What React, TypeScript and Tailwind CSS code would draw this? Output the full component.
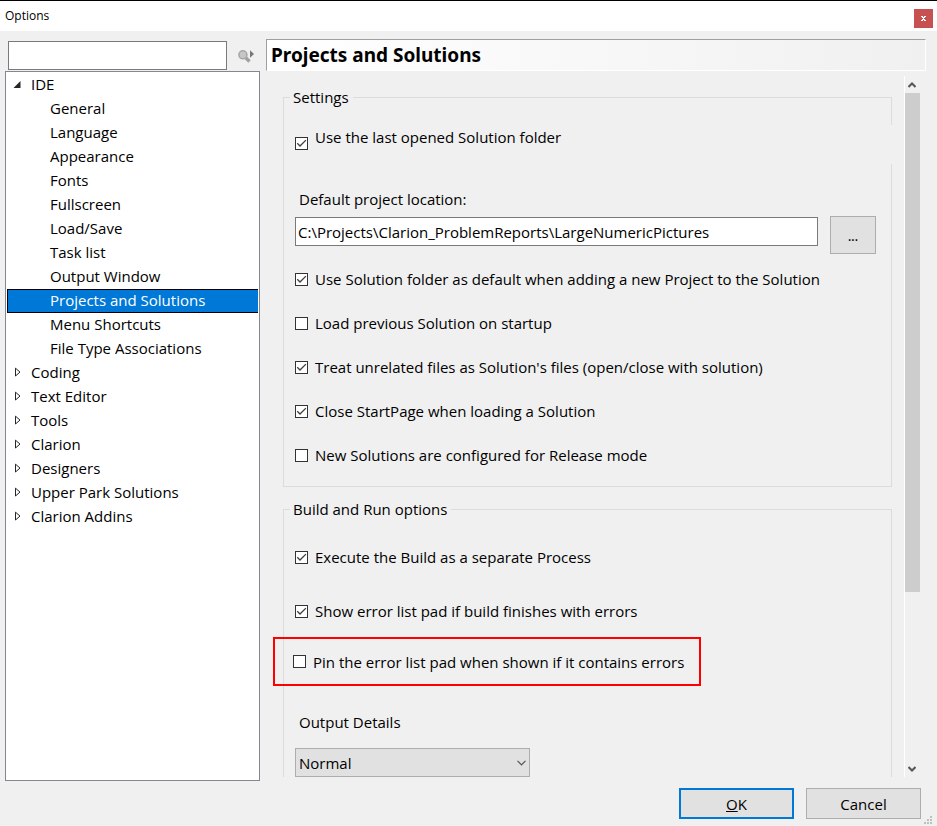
import { useState } from 'react';
import type { ReactNode } from 'react';
import clsx from 'clsx';

const ideItems = [
  'General',
  'Language',
  'Appearance',
  'Fonts',
  'Fullscreen',
  'Load/Save',
  'Task list',
  'Output Window',
  'Projects and Solutions',
  'Menu Shortcuts',
  'File Type Associations',
];

const categories = ['Coding', 'Text Editor', 'Tools', 'Clarion', 'Designers', 'Upper Park Solutions', 'Clarion Addins'];

function CheckBox({ id, defaultChecked }: { id: string; defaultChecked?: boolean }) {
  return (
    <span className="grid h-[13px] w-[13px] shrink-0">
      <input
        id={id}
        type="checkbox"
        defaultChecked={defaultChecked}
        className="peer col-start-1 row-start-1 h-[13px] w-[13px] appearance-none border border-[#333333] bg-white"
      />
      <svg
        viewBox="0 0 13 13"
        className="pointer-events-none invisible col-start-1 row-start-1 h-[13px] w-[13px] peer-checked:visible"
        fill="none"
        stroke="#3c3c3c"
        strokeWidth="1.3"
      >
        <path d="M2.3 6.3 L5 9 L10.9 3.1" />
      </svg>
    </span>
  );
}

function CheckRow({ id, checked, children }: { id: string; checked?: boolean; children: ReactNode }) {
  return (
    <div className="flex h-5 items-center gap-[7px]">
      <CheckBox id={id} defaultChecked={checked} />
      <label htmlFor={id}>{children}</label>
    </div>
  );
}

function Group({ title, className, children }: { title: string; className?: string; children: ReactNode }) {
  return (
    <fieldset className={clsx('min-w-0 border border-[#dcdcdc] pr-[15px] pl-[11px]', className)}>
      <legend className="-ml-[5px] pr-1 pl-[3px] leading-5">{title}</legend>
      {children}
    </fieldset>
  );
}

export default function App() {
  const [selected, setSelected] = useState('Projects and Solutions');

  return (
    <div className="flex min-h-screen flex-col bg-[#f0f0f0] font-['Open_Sans',sans-serif] text-[15px] leading-5 text-black">
      {/* Title bar */}
      <header className="flex h-[31px] items-center justify-between border-t border-black bg-white pr-1 pl-[5px]">
        <h1 className="text-xs">Options</h1>
        <button aria-label="Close" className="mt-1 flex h-[19px] w-[19px] items-center justify-center bg-[#c75050]">
          <svg viewBox="0 0 5 5" className="h-[5px] w-[5px]" fill="#fff" shapeRendering="crispEdges">
            <path d="M0 0h2v1h1v-1h2v1h-1v1h-1v1h1v1h1v1h-2v-1h-1v1h-2v-1h1v-1h1v-1h-1v-1h-1z" />
          </svg>
        </button>
      </header>

      <main className="flex flex-1 gap-[6px] pr-[11px] pl-[5px]">
        {/* Category tree */}
        <div className="flex w-[255px] shrink-0 flex-col pt-[10px]">
          <div className="mb-px flex items-center pl-[3px]">
            <input aria-label="Search options" className="h-[29px] w-[219px] border border-[#7a7a7a] bg-white px-1" />
            <button aria-label="Search" className="ml-[11px]">
              <svg viewBox="0 0 16 14" className="h-[14px] w-4">
                <path d="M7.5 8.5 L11.5 12.5" stroke="#a0a0a0" strokeWidth="3.4" />
                <circle cx="4.9" cy="5.8" r="4" fill="#c6c6c6" stroke="#a8a8a8" strokeWidth="1.6" />
                <path d="M12 1.2v7.6l4-3.8z" fill="#777" />
              </svg>
            </button>
          </div>
          <nav className="flex-1 border border-[#828790] bg-white p-px">
            <button className="flex h-6 w-full items-center pb-[2px] text-left">
              <svg viewBox="0 0 7 7" className="mr-[10px] ml-[6px] h-[7px] w-2 shrink-0">
                <path d="M7 0v7H0z" fill="#262626" />
              </svg>
              IDE
            </button>
            <ul>
              {ideItems.map((item) => (
                <li key={item}>
                  <button
                    onClick={() => setSelected(item)}
                    className={clsx(
                      'flex h-6 w-full items-center border-y border-l pb-[2px] pl-[42px] text-left',
                      item === selected ? 'border-black bg-[#0078d7] text-white' : 'border-transparent',
                    )}
                  >
                    {item}
                  </button>
                </li>
              ))}
              {categories.map((item) => (
                <li key={item}>
                  <button className="flex h-6 w-full items-center pb-[2px] text-left">
                    <svg viewBox="0 0 6 10" className="mr-[10px] ml-2 h-[10px] w-[6px] shrink-0" fill="none" stroke="#262626">
                      <path d="M0.5 1.2v7.8L5 5.1z" />
                    </svg>
                    {item}
                  </button>
                </li>
              ))}
            </ul>
          </nav>
        </div>

        {/* Options panel */}
        <section className="flex min-w-0 flex-1 flex-col pt-2 pb-1">
          <h2 className="flex h-8 items-center border border-t-[#a0a0a0] border-r-white border-b-white border-l-[#a0a0a0] bg-linear-to-r from-white to-[#f0f0f0] pl-1 font-['Noto_Sans',sans-serif] text-[19px] font-bold">
            Projects and Solutions
          </h2>

          <div className="mt-[5px] mr-[6px] flex flex-1">
            <div className="min-w-0 flex-1 pt-[11px] pr-3 pl-[17px]">
              <Group title="Settings" className="pb-[21px]">
                <div className="mt-[18px] -mr-4 flex h-[39px] items-center gap-[7px] bg-[#f0f0f0] pb-[2px]">
                  <CheckBox id="last-folder" defaultChecked />
                  <label htmlFor="last-folder" className="pb-[14px]">
                    Use the last opened Solution folder
                  </label>
                </div>

                <label htmlFor="location" className="mt-[25px] block pl-1">
                  Default project location:
                </label>
                <div className="mt-[7px] flex items-start gap-3">
                  <input
                    id="location"
                    defaultValue="C:\Projects\Clarion_ProblemReports\LargeNumericPictures"
                    className="mt-px h-[29px] min-w-0 flex-1 border border-[#7a7a7a] bg-white px-[2px]"
                  />
                  <button className="h-[38px] w-[46px] border border-[#adadad] bg-[#e1e1e1] pt-1 text-xs font-semibold">
                    ...
                  </button>
                </div>

                <div className="mt-[15px] flex flex-col gap-6">
                  <CheckRow id="default-folder" checked>
                    Use Solution folder as default when adding a new Project to the Solution
                  </CheckRow>
                  <CheckRow id="load-previous">Load previous Solution on startup</CheckRow>
                  <CheckRow id="unrelated" checked>
                    Treat unrelated files as Solution's files (open/close with solution)
                  </CheckRow>
                  <CheckRow id="close-start" checked>
                    Close StartPage when loading a Solution
                  </CheckRow>
                  <CheckRow id="release">New Solutions are configured for Release mode</CheckRow>
                </div>
              </Group>

              <Group title="Build and Run options" className="mt-3 border-b-0">
                <div className="mt-7 flex flex-col gap-[34px]">
                  <CheckRow id="separate" checked>
                    Execute the Build as a separate Process
                  </CheckRow>
                  <CheckRow id="show-errors" checked>
                    Show error list pad if build finishes with errors
                  </CheckRow>
                </div>
                <div className="mt-4 -ml-[22px] flex h-[49px] w-[428px] items-center border-2 border-[#ff0000] pl-[18px]">
                  <CheckRow id="pin-errors">Pin the error list pad when shown if it contains errors</CheckRow>
                </div>
                <label htmlFor="details" className="mt-[26px] block pl-1">
                  Output Details
                </label>
                <div className="mt-4 grid w-[235px] items-center">
                  <select
                    id="details"
                    className="col-start-1 row-start-1 h-[29px] w-full appearance-none border border-[#adadad] bg-[#e1e1e1] pl-[3px]"
                  >
                    <option>Normal</option>
                  </select>
                  <svg
                    viewBox="0 0 9 6"
                    className="pointer-events-none col-start-1 row-start-1 mr-1 h-[6px] w-[9px] justify-self-end"
                    fill="none"
                    stroke="#555"
                    strokeWidth="1.2"
                  >
                    <path d="M0.5 0.8 L4.5 4.8 L8.5 0.8" />
                  </svg>
                </div>
              </Group>
            </div>

            {/* Scroll bar */}
            <div className="flex w-4 flex-col border-l border-white">
              <button aria-label="Scroll up" className="flex h-[17px] shrink-0 items-center justify-center pr-px">
                <svg viewBox="0 0 8 6" className="h-[6px] w-2" fill="none" stroke="#555" strokeWidth="2">
                  <path d="M0.5 5 L4 1.5 L7.5 5" />
                </svg>
              </button>
              <div className="flex-1">
                <div className="h-[499px] bg-[#cdcdcd]" />
              </div>
              <button aria-label="Scroll down" className="flex h-[17px] shrink-0 items-center justify-center pr-px">
                <svg viewBox="0 0 8 6" className="h-[6px] w-2" fill="none" stroke="#555" strokeWidth="2">
                  <path d="M0.5 1 L4 4.5 L7.5 1" />
                </svg>
              </button>
            </div>
          </div>
        </section>
      </main>

      <footer className="flex justify-end pt-[7px] pr-[5px]">
        <div className="flex gap-3 pb-[7px]">
          <button className="h-[31px] w-[115px] border-2 border-[#0078d7] bg-[#e1e1e1]">
            <span className="underline">O</span>K
          </button>
          <button className="h-[31px] w-[115px] border border-[#adadad] bg-[#e1e1e1]">Cancel</button>
        </div>
        <svg viewBox="0 0 8 8" className="mb-[2px] ml-[3px] h-2 w-2 self-end" fill="#bfbfbf" shapeRendering="crispEdges">
          <path d="M6 0h2v2h-2z M3 3h2v2h-2z M6 3h2v2h-2z M0 6h2v2h-2z M3 6h2v2h-2z M6 6h2v2h-2z" />
        </svg>
      </footer>
    </div>
  );
}
